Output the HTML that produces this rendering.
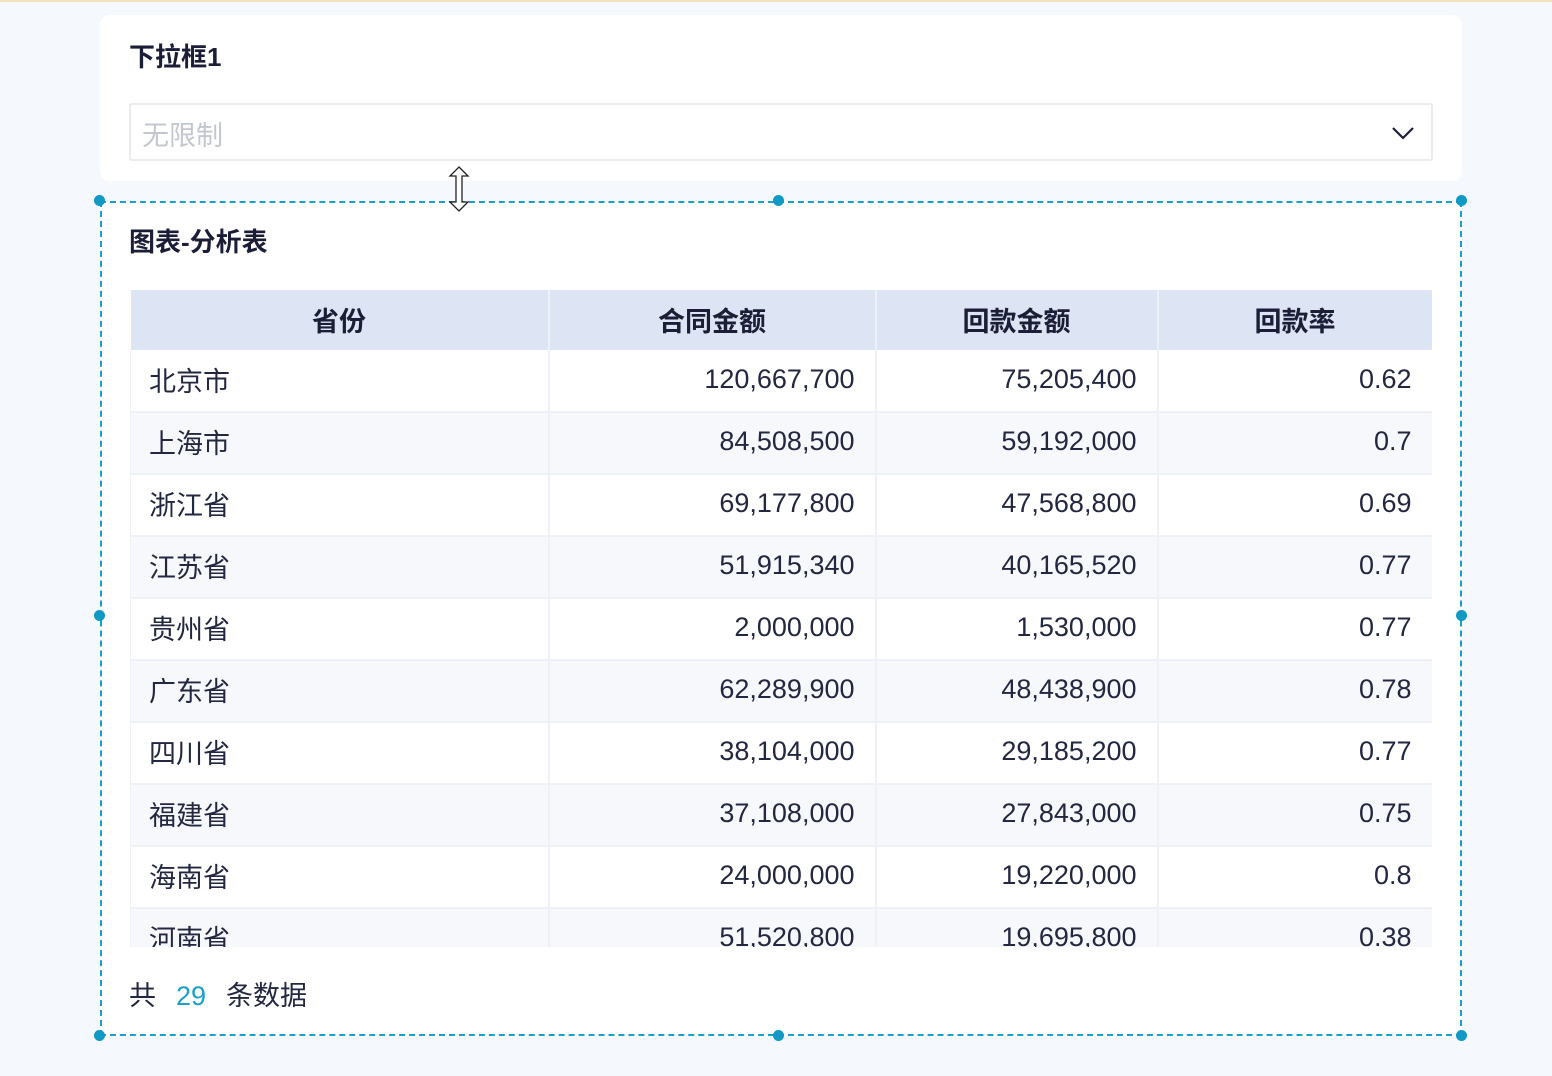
<!DOCTYPE html>
<html><head><meta charset="utf-8"><style>
*{margin:0;padding:0;box-sizing:border-box}
body{width:1552px;height:1076px;background:#f5f8fd;font-family:"Liberation Sans","Noto Sans CJK SC",sans-serif;position:relative;overflow:hidden;color:#1f2340}
.topline{position:absolute;left:0;top:0;width:1552px;height:2px;background:#f3e2bd}
.card1{position:absolute;left:100px;top:15px;width:1362px;height:166px;background:#fff;border-radius:10px}
.t1{position:absolute;left:129px;top:37px;font-size:26px;font-weight:bold;color:#1b1e36}
.sel{position:absolute;left:129px;top:103px;width:1304px;height:58px;border:2px solid #e9ebef;border-radius:3px;background:#fff}
.sel span{position:absolute;left:11px;top:9px;font-size:27px;color:#c3c7d1}
.card2{position:absolute;left:100px;top:201px;width:1362px;height:835px;background:#fff;border:2px dashed #1aa0c8}
.dot{position:absolute;width:11px;height:11px;border-radius:50%;background:#1099c4}
.t2{position:absolute;left:129px;top:222px;font-size:26px;font-weight:bold;color:#1b1e36}
.tbl{position:absolute;left:130px;top:290px;width:1302px;height:657px;overflow:hidden}
table{border-collapse:collapse;width:1302px;table-layout:fixed}
th{height:60px;background:#dde4f3;font-size:27px;font-weight:bold;border-right:2px solid #eef1f8;color:#1b1e36;padding-bottom:2px}
td{height:62px;font-size:27px;border-right:2px solid #eef1f8;border-bottom:2px solid #eef1f8;padding:0 20px 3px 18px;text-align:right;color:#23273f}
td:first-child{text-align:left;border-left:1px solid #eef1f8}
tr:nth-child(odd) td{background:#f6f8fc}
.foot{position:absolute;left:129px;top:974px;font-size:27px;color:#23273f}
.foot b{font-weight:normal;color:#1a9fc6;margin:0 20px}
</style></head><body>
<div class="topline"></div>
<div class="card1"></div>
<div class="t1">下拉框1</div>
<div class="sel"><span>无限制</span>
<svg style="position:absolute;right:16px;top:20px" width="24" height="16" viewBox="0 0 24 16"><path d="M2 3 L12 13 L22 3" fill="none" stroke="#1b1e36" stroke-width="2.2"/></svg></div>
<div class="card2"></div>
<div class="dot" style="left:94px;top:195px"></div>
<div class="dot" style="left:773px;top:195px"></div>
<div class="dot" style="left:1456px;top:195px"></div>
<div class="dot" style="left:94px;top:610px"></div>
<div class="dot" style="left:1456px;top:610px"></div>
<div class="dot" style="left:94px;top:1030px"></div>
<div class="dot" style="left:773px;top:1030px"></div>
<div class="dot" style="left:1456px;top:1030px"></div>
<svg style="position:absolute;left:448px;top:166px" width="22" height="46" viewBox="0 0 22 46"><path d="M11 1 L20 10 L14 10 L14 36 L20 36 L11 45 L2 36 L8 36 L8 10 L2 10 Z" fill="#fff" stroke="#222" stroke-width="1.3"/></svg>
<div class="t2">图表-分析表</div>
<div class="tbl"><table>
<colgroup><col style="width:418px"><col style="width:327px"><col style="width:282px"><col style="width:275px"></colgroup>
<tr><th>省份</th><th>合同金额</th><th>回款金额</th><th>回款率</th></tr>
<tr><td>北京市</td><td>120,667,700</td><td>75,205,400</td><td>0.62</td></tr>
<tr><td>上海市</td><td>84,508,500</td><td>59,192,000</td><td>0.7</td></tr>
<tr><td>浙江省</td><td>69,177,800</td><td>47,568,800</td><td>0.69</td></tr>
<tr><td>江苏省</td><td>51,915,340</td><td>40,165,520</td><td>0.77</td></tr>
<tr><td>贵州省</td><td>2,000,000</td><td>1,530,000</td><td>0.77</td></tr>
<tr><td>广东省</td><td>62,289,900</td><td>48,438,900</td><td>0.78</td></tr>
<tr><td>四川省</td><td>38,104,000</td><td>29,185,200</td><td>0.77</td></tr>
<tr><td>福建省</td><td>37,108,000</td><td>27,843,000</td><td>0.75</td></tr>
<tr><td>海南省</td><td>24,000,000</td><td>19,220,000</td><td>0.8</td></tr>
<tr><td>河南省</td><td>51,520,800</td><td>19,695,800</td><td>0.38</td></tr>
</table></div>
<div class="foot">共<b>29</b>条数据</div>
</body></html>
